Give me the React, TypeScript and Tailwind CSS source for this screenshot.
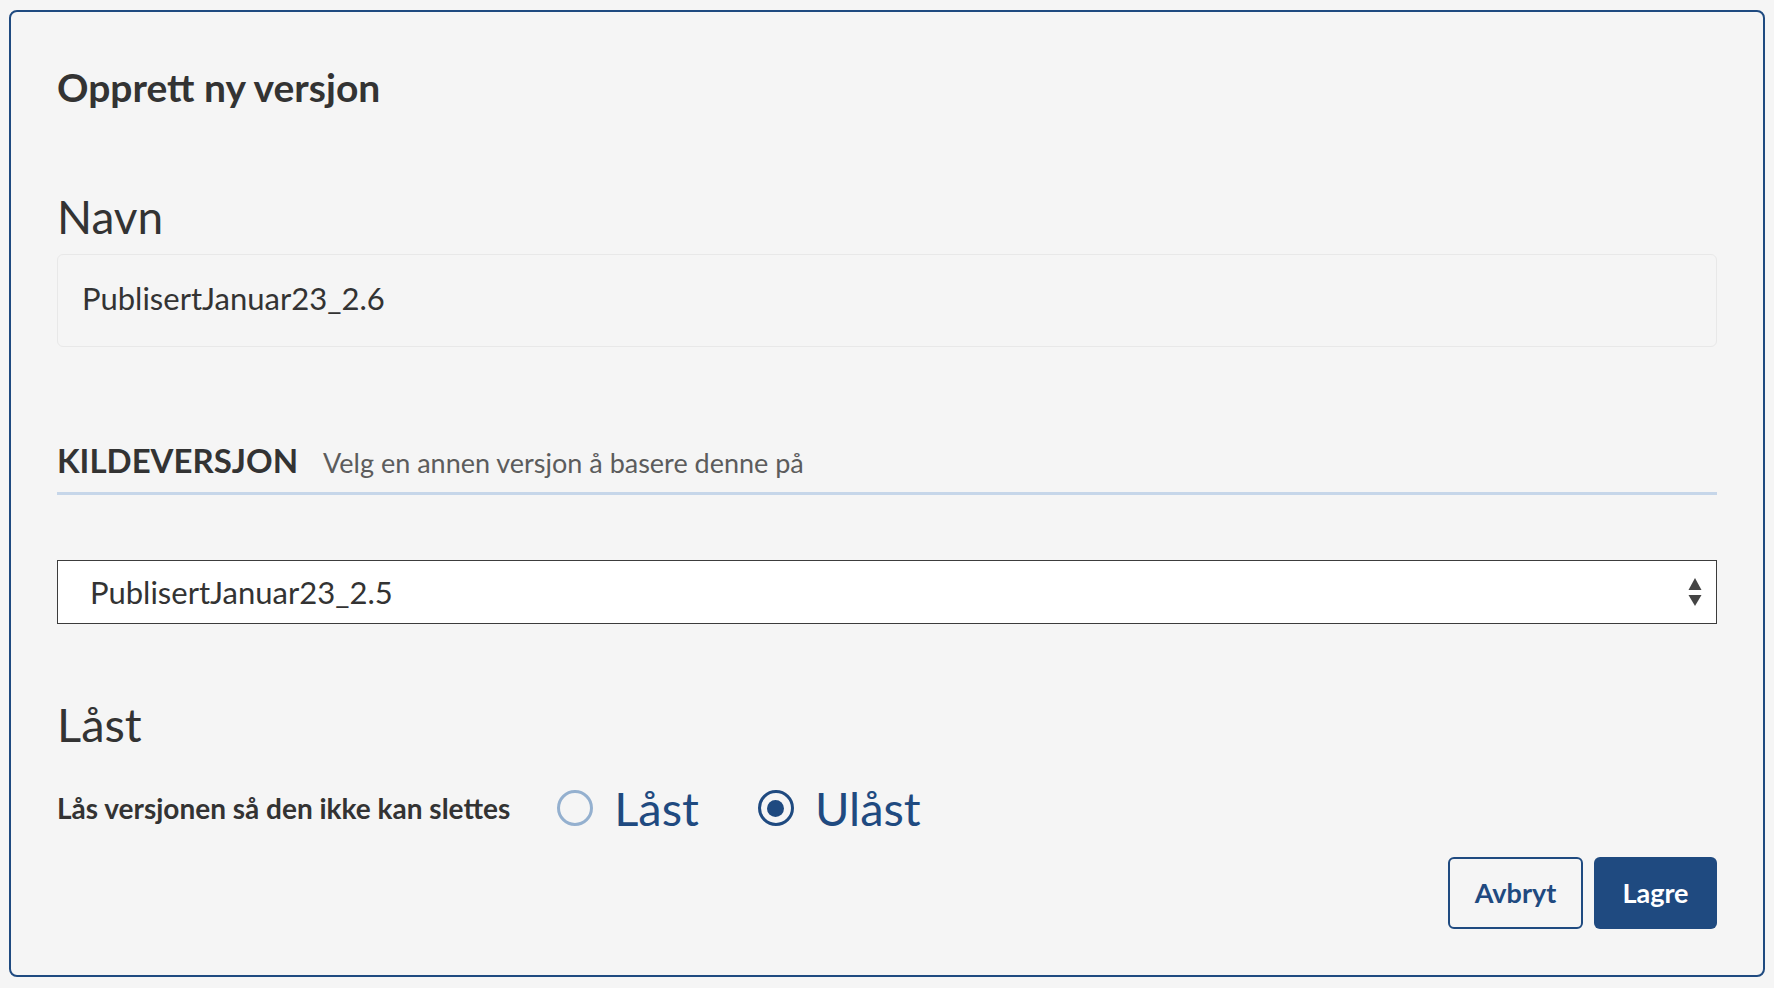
import { useState } from "react";

const font = { fontFamily: '"Lato", "Liberation Sans", sans-serif' };

function Radio({ checked, label, onClick }: { checked: boolean; label: string; onClick: () => void }) {
    return (
        <button type="button" onClick={onClick} className="flex items-center gap-[21px] cursor-pointer">
            {checked ? (
                <span className="w-[36px] h-[36px] rounded-full border-[3px] border-[#1f4a80] flex items-center justify-center">
                    <span className="w-[17px] h-[17px] rounded-full bg-[#1f4a80]" />
                </span>
            ) : (
                <span className="w-[36px] h-[36px] rounded-full border-[3px] border-[#94b0cf]" />
            )}
            <span className="text-[47px] leading-[56px] text-[#1f4a80]">{label}</span>
        </button>
    );
}

export default function App() {
    const [locked, setLocked] = useState(false);

    return (
        <div className="w-[1774px] h-[988px] bg-[#f5f5f5] pt-[10px] pl-[9px] text-[#333333]" style={font}>
            <div className="w-[1756px] h-[967px] border-2 border-[#1f4a80] rounded-[8px] px-[46px] pt-[52px] flex flex-col">
                <h1 className="text-[39px] leading-[46px] font-bold">Opprett ny versjon</h1>

                <h2 className="mt-[79px] text-[46px] leading-[56px]">Navn</h2>
                <div className="mt-[9px] h-[93px] border border-[#e8e8e8] rounded-[6px] bg-[#f5f5f5] pl-[24px] pt-[25px] text-[31px] leading-[36px]">
                    PublisertJanuar23_2.6
                </div>

                <div className="mt-[94px] flex items-baseline gap-[25px] pb-[10px] border-b-[3px] border-[#c6d6e9]">
                    <span className="text-[33px] leading-[38px] font-bold">KILDEVERSJON</span>
                    <span className="text-[27px] leading-[38px] text-[#5c5c5c]">Velg en annen versjon å basere denne på</span>
                </div>

                <div className="mt-[65px] h-[64px] bg-white border-[1.5px] border-[#3c3c3c] flex items-center justify-between pl-[32px] pr-[14px]">
                    <span className="text-[31px] leading-[36px]">PublisertJanuar23_2.5</span>
                    <svg width="14" height="29" viewBox="0 0 14 29" className="text-[#444444]">
                        <path d="M7 0 L13.5 12 L0.5 12 Z" fill="currentColor" />
                        <path d="M0.5 17 L13.5 17 L7 28 Z" fill="currentColor" />
                    </svg>
                </div>

                <h2 className="mt-[72px] text-[47px] leading-[56px]">Låst</h2>

                <div className="mt-[28px] h-[56px] flex items-center">
                    <span className="text-[28px] leading-[30px] font-bold">Lås versjonen så den ikke kan slettes</span>
                    <div className="ml-[47px] flex items-center gap-[59px]">
                        <Radio checked={locked} label="Låst" onClick={() => setLocked(true)} />
                        <Radio checked={!locked} label="Ulåst" onClick={() => setLocked(false)} />
                    </div>
                </div>

                <div className="mt-[21px] flex justify-end gap-[11px]">
                    <button className="w-[135px] h-[72px] border-2 border-[#1f4a80] rounded-[6px] text-[#1f4a80] text-[27px] font-bold">
                        Avbryt
                    </button>
                    <button className="w-[123px] h-[72px] bg-[#1f4a80] rounded-[6px] text-white text-[27px] font-bold">
                        Lagre
                    </button>
                </div>
            </div>
        </div>
    );
}
